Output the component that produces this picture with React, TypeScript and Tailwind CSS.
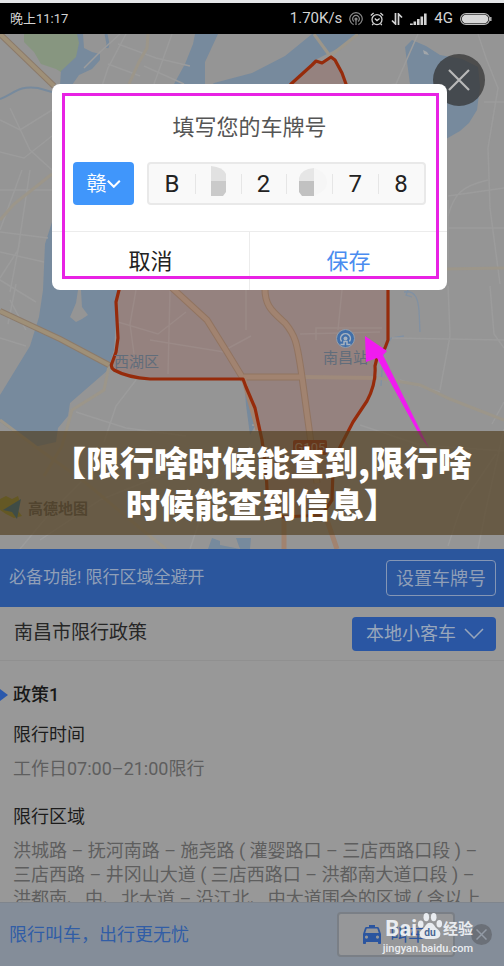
import type { ReactNode } from "react";

const plate = ["B", "", "2", "", "7", "8"];

const zone =
	"M291 84 312 65 316 61 322 63 331 57 335 60 342 73 346 84 388 286V340L385 348 377 358 375 366C376 380 373 390 367 401L353 422 340 447 333 470 332 500 322 515 283 517 268 509 266 470 262 440 255 408 246 387 243 379H150C136 378 123 375 114 370Q110 367 112 363L116 352 118 338 116 302 120 286Z";

function StatusBar() {
	return (
		<header className="shrink-0 border-t-[3px] border-[#e4e6e8] bg-black text-[#d4d4d4]">
			<div className="flex h-[31px] items-center justify-between pl-[10px] pr-3">
				<span className="text-[13px]">晚上11:17</span>
				<div className="flex items-center gap-[7px] text-[15px]">
					<span>1.70K/s</span>
					<svg width="14" height="14" viewBox="0 0 14 14" fill="none" stroke="#8a8a8a" strokeWidth="1.2">
						<path d="M4.6 12.6A6.2 6.2 0 1 1 9.4 12.6" />
						<path d="M5 9.6A3.4 3.4 0 1 1 9 9.6" />
						<circle cx="7" cy="7" r="1" fill="#8a8a8a" />
						<path d="M7 8v5" />
					</svg>
					<svg width="14" height="14" viewBox="0 0 14 14" fill="none" stroke="currentColor" strokeWidth="1.3">
						<circle cx="7" cy="7.6" r="5" />
						<path d="M4.8 6.6 7 8.6l2.6-2M.8 3.4 3.6 1M13.2 3.4 10.4 1M3.4 11.6l-1.2 1.6M10.6 11.6l1.2 1.6" />
					</svg>
					<svg width="12" height="12" viewBox="0 0 12 12" fill="none" stroke="currentColor" strokeWidth="1.7">
						<path d="M4.5 0v11L1 7.5M7.5 12V1L11 4.5" />
					</svg>
					<svg width="17" height="12" viewBox="0 0 17 12" fill="currentColor">
						<path d="M0 10.5h2.8V12H0zM3.5 8.5h2.6V12H3.5zM7 6h2.6v6H7zM10.5 3.5h2.6V12h-2.6zM14 .5h2.6V12H14z" />
					</svg>
					<span>4G</span>
					<svg width="32" height="12" viewBox="0 0 32 12">
						<rect x=".6" y=".6" width="29" height="10.8" rx="5.4" fill="none" stroke="#bdbdbd" strokeWidth="1.1" />
						<rect x="1.8" y="1.8" width="26.6" height="8.4" rx="4.2" fill="#d6d6d6" />
						<path d="M30.8 4v4" stroke="#bdbdbd" strokeWidth="1.4" />
					</svg>
				</div>
			</div>
		</header>
	);
}

function CityMap() {
	return (
		<svg
			className="block h-full w-full"
			viewBox="0 34 504 515"
			preserveAspectRatio="xMidYMid slice"
			role="img"
			aria-label="南昌市限行区域"
		>
			<rect y="34" width="504" height="515" fill="#959595" />

			{/* park */}
			<path d="M24 34h55l1 14-4 14-12 12-8-5-15-5-7-12-10-10z" fill="#879680" />

			{/* water */}
			<g fill="#778a9d">
				<path d="M77 34h6l1 14 8 4 8 2v6l-8 9-13 6-7 10H60l1-14 15-14 3-14z" />
				<path d="M195 34h23l-13 28 0 22h-31l11-20 8-20z" />
				<path d="M206 90l8-7 38-10 33-17 27-22h48l-21 14-24 12-24 26-30 10z" />
				<path d="M412 40l14 6 14 9 22 4 16 8 2 20-3 23-8 13-9 8-14 8-18-40-18-15-5-37z" />
				<path d="M52 222 45 244 43 290 39 317 30 346 0 395V422L34 447 56 442 58 428 68 416 70 403 108 370 114 350 118 290 130 222z" />
				<path d="M212 538l8 3v4l20 4-32 0zM236 538h15l-1 11h-10zM244 380l8 24 4 20-6 11-4-30z" />
			</g>
			<path d="M106 34l2 10 -1 4" stroke="#778a9d" strokeWidth="3" fill="none" />
			<path d="M0 99c14-5 18-14 38-11l14 4" stroke="#778a9d" strokeWidth="2" fill="none" />
			<path d="M78 290l-2 13-6 14 6 5 6-3 6-4-6-8-1-17z" fill="#959595" />
			<path d="M404 292c12-2 14 8 15 18l1 22M404 336l-13 2-8 18-2 30M408 290l-2 5 6 2" stroke="#8191a3" strokeWidth="1.3" fill="none" />
			<path d="M423 50l4 2 2 3-5-1z" fill="#a2a6aa" />

			{/* side streets */}
			<g stroke="#9c9c9c" strokeWidth="1.5" fill="none">
				<path d="M126 34l-18 34-6 18M84 68l16-16 20-18M118 44l38 14 34 8M108 64l32 12M172 34l-18 50M144 66l40 18" />
				<path d="M0 120l20 10 32-20M0 152l24 6 28-22M10 108l20 42 22 20M0 190h52M22 170l-22 60M0 232l48 6M30 170l-12 80-18 28M0 280l36 22M20 240l-10 52" />
				<path d="M0 338l26 8M16 284l-8 40M44 262l-44-10" />
				<path d="M136 380l-20 26-12 36M76 412l50 16 60 8M252 425l80 4M10 300l16 30" />
				<path d="M478 34l8 24 12 30-10 60 2 60 10 76M448 216c6-22 14-30 40-36M448 196l56-8M448 228h56M504 102h-20M418 34l-22 50-30 4" />
				<path d="M448 286l2 50-10 54M448 200v60M490 286l4 48 10 14M392 338l112 2M400 380l40 12M448 546l14-42 34-50M478 549l8-40 18-80M492 424l12-22" />
				<path d="M360 425l60 20 84 6M20 549l30-36 60-60M40 540l60-40 90-36M190 549l20-60 30-40" />
			</g>

			{/* restricted zone */}
			<path d={zone} fill="#95827f" />
			<g stroke="#9b8a87" strokeWidth="1.5" fill="none">
				<path d="M136 290l-6 34 4 30M118 322l40 12 28-22M170 290l-2 84M150 340l74 12M246 290v40M342 290l-4 40M316 340v-12h66M225 350l26-14M300 334l80-2" />
			</g>

			{/* main roads */}
			<g fill="none" stroke="#9c968a" strokeWidth="3">
				<path d="M148 34l-1 14-8 14-10 22M314 34l16 22 28-22M109 366l-5 24-32 20-10 36-18 30" />
				<path d="M378 378l42 7 30 14 54 21M504 268l-60 1M0 220l14-16 38-30" />
				<path d="M0 420l36 27 50 36 60 50 20 16" />
			</g>
			<path d="M303 377l74 1" fill="none" stroke="#9f8a7b" strokeWidth="4" />
			<g fill="none" stroke="#8c7b6b" strokeWidth="6">
				<path d="M0 34l54 52M0 311l60 28 49 26" />
			</g>
			<g fill="none" stroke="#9f9078" strokeWidth="4">
				<path d="M0 34l54 52M0 311l60 28 49 26" />
			</g>
			<g fill="none" stroke="#917461" strokeWidth="7">
				<path d="M170 286l37 34 20 32 17 28M265 286c-1 20 8 26 20 37 10 12 12 18 17 54l9 66 6 40M244 377h59" />
			</g>
			<g fill="none" stroke="#a18370" strokeWidth="5">
				<path d="M170 286l37 34 20 32 17 28 14 50M265 286c-1 20 8 26 20 37 10 12 12 18 17 54l9 66 6 40M244 377h59M284 510v39M320 500l17 49" />
			</g>

			<path d={zone} fill="none" stroke="#962b0b" strokeWidth="3.2" strokeLinejoin="round" />

			<text x="114" y="367" fontSize="15" fill="#616d7b">西湖区</text>
			<circle cx="345.5" cy="338.5" r="9" fill="#416fa9" stroke="#929eac" strokeWidth="1" />
			<path d="M340.500 344.500h3.500v-3h3v3h3.500M341.600 341.500a4.900 4.900 0 1 1 7.800 0" fill="none" stroke="#a6b2c0" strokeWidth="1.500" />
			<circle cx="345.5" cy="338.5" r="2" fill="#a6b2c0" />
			<text x="323" y="363" fontSize="15" fill="#616d7b">南昌站</text>
			<rect x="293" y="440" width="34" height="15" rx="2" fill="#92301c" />
			<text x="310" y="452" fontSize="13" textAnchor="middle" fill="#b29388">G105</text>

			<path d="M0 499l6-3 6 3 6-3 2 6-4 6 6 8-8 2-8-4-6-4z" fill="#8b8c35" />
			<path d="M3 510l18-11-4 20-5-7z" fill="#226b94" />
			<text x="28" y="514" fontSize="15" fontWeight="bold" fill="#555">高德地图</text>

			{/* pointer to the dialog */}
			<path d="M365 336 387 351 383 355 429 448 420 436 377 358 366 362z" fill="#f01bf0" />
		</svg>
	);
}

function PlateDialog() {
	return (
		<div role="dialog" aria-labelledby="plate-title" className="absolute left-[52px] right-[57px] top-[50px] rounded-lg bg-white">
			<h2 id="plate-title" className="pt-7 text-center text-[22px] leading-8 text-[#555]">
				填写您的车牌号
			</h2>
			<div className="flex gap-[13px] px-[21px] pb-[26px] pt-[18px]">
				<button
					type="button"
					className="flex h-[43px] w-[61px] items-center justify-center rounded bg-[#4096fb] text-[20px] text-white"
				>
					赣
					<svg width="14" height="8" viewBox="0 0 14 8" fill="none" stroke="currentColor" strokeWidth="2">
						<path d="m.8.8 6 6 6-6" />
					</svg>
				</button>
				<div className="flex min-w-0 flex-1 items-center rounded border-2 border-[#e9e9e9] bg-[#f9f9f9]">
					{plate.map((char, i) => (
						<div key={i} className="relative min-w-0 flex-1">
							{i > 0 && <span className="absolute left-0 top-1 h-5 w-px bg-[#e6e6e6]" />}
							<input
								aria-label={`车牌第${i + 1}位`}
								defaultValue={char}
								maxLength={1}
								className="block h-7 w-full bg-transparent text-center text-[24px] text-[#222] outline-none"
							/>
							{i === 1 && (
								<svg className="absolute -top-1 left-4" width="16" height="30" viewBox="0 0 16 30">
									<path d="M0 0q12 1 15 8v7H0z" fill="#e1e1e1" />
									<path d="M0 15h15v11l-3 4H0z" fill="#cacaca" />
								</svg>
							)}
							{i === 3 && (
								<svg className="absolute -top-1 left-[13px]" width="28" height="30" viewBox="0 0 28 30">
									<path d="M15 2q13 4 13 15 0 8-13 13z" fill="#f6f6f6" />
									<path d="M15 2Q2 3 0 12v3h15z" fill="#e6e6e6" />
									<path d="M0 15h15v15H3l-3-4z" fill="#c1c1c1" />
								</svg>
							)}
						</div>
					))}
				</div>
			</div>
			<div className="flex border-t border-[#ececec] text-[22px]">
				<button type="button" className="h-[58px] flex-1 border-r border-[#ececec] text-[#222]">
					取消
				</button>
				<button type="button" className="h-[58px] flex-1 text-[#4a8cf0]">
					保存
				</button>
			</div>
			<div className="pointer-events-none absolute bottom-[11px] left-[10px] right-2 top-[9px] border-[3px] border-[#e822e4]" />
		</div>
	);
}

function Policy({ title, children }: { title: string; children: ReactNode }) {
	return (
		<div className="pl-[13px] text-[18px]">
			<h4 className="leading-6 text-[#1c1c1c]">{title}</h4>
			<p className="mt-[10px] whitespace-nowrap leading-6 text-[#5e5e5e]">{children}</p>
		</div>
	);
}

function Watermark() {
	return (
		<div className="pointer-events-none absolute right-[31px] top-2 font-bold text-[#e9ecf0]">
			<div className="flex h-[30px] items-end justify-end">
				<span className="text-[22px] leading-6">Bai</span>
				<svg width="26" height="30" viewBox="0 0 28 30" fill="currentColor">
					<ellipse cx="4" cy="13" rx="3" ry="4" />
					<ellipse cx="10" cy="5.5" rx="3" ry="4.4" />
					<ellipse cx="18" cy="5.5" rx="3" ry="4.4" />
					<ellipse cx="24" cy="12.5" rx="3" ry="4" />
					<path d="M14 11.5c4 0 4.5 3.5 7 6 2.5 2.3 5 4 4 7.5-1 3.8-5 4-11 4s-10-.2-11-4c-.9-3.5 1.5-5.2 4-7.5 2.5-2.5 3-6 7-6z" />
					<text x="14" y="26" fontSize="11" textAnchor="middle" fill="#4b6795">du</text>
				</svg>
				<span className="text-[15px] leading-6">经验</span>
			</div>
			<div className="text-[11px] font-medium leading-4">jingyan.baidu.com</div>
		</div>
	);
}

export default function App() {
	return (
		<div className="flex h-screen flex-col overflow-hidden bg-[#989898] font-[Roboto,'Noto_Sans_CJK_SC',sans-serif]">
			<StatusBar />

			<main className="flex min-h-0 flex-1 flex-col">
				<section className="relative aspect-[504/515] w-full shrink-0">
					<CityMap />
					<button
						type="button"
						aria-label="关闭"
						className="absolute right-[19px] top-5 flex size-[52px] items-center justify-center rounded-full bg-[#333333bb] text-[#b9b9b9]"
					>
						<svg width="22" height="22" viewBox="0 0 22 22" stroke="currentColor" strokeWidth="2.2">
							<path d="m1 1 20 20M21 1 1 21" />
						</svg>
					</button>
					<PlateDialog />

					<div className="absolute inset-x-0 bottom-[14px] bg-[#503c1ca6] pb-[10px] pl-11 pr-6 pt-[10px]">
						<h1 className="text-center font-['Noto_Sans_CJK_SC',sans-serif] text-[34px] font-black leading-[42px] text-white">
							【限行啥时候能查到,限行啥时候能查到信息】
						</h1>
					</div>
				</section>

				<section className="flex h-[58px] shrink-0 items-center justify-between bg-[#2b569d] pl-[9px] pr-2 text-[#909fb7]">
					<p className="text-[17px]">必备功能! 限行区域全避开</p>
					<button type="button" className="h-9 rounded border border-[#8496b5] px-[9px] text-[18px]">
						设置车牌号
					</button>
				</section>

				<section className="flex h-[54px] shrink-0 items-center justify-between border-b border-[#909090] pl-[14px] pr-2">
					<h2 className="text-[19px] text-[#262626]">南昌市限行政策</h2>
					<button
						type="button"
						className="flex h-[34px] items-center gap-2 rounded bg-[#2a56a3] pl-[14px] pr-3 text-[18px] text-[#98a6bb]"
					>
						本地小客车
						<svg width="20" height="11" viewBox="0 0 20 11" fill="none" stroke="currentColor" strokeWidth="1.5">
							<path d="m1 1 9 9 9-9" />
						</svg>
					</button>
				</section>

				<section className="min-h-0 flex-1 overflow-hidden pt-[22px]">
					<h3 className="flex items-center gap-[5px] text-[18px] font-medium leading-6 text-[#181818]">
						<svg width="8" height="12" viewBox="0 0 8 12" fill="#2a58ac">
							<path d="M0 0l8 6-8 6z" />
						</svg>
						政策1
					</h3>
					<div className="mt-4 flex flex-col gap-6">
						<Policy title="限行时间">工作日07:00–21:00限行</Policy>
						<Policy title="限行区域">
							洪城路 – 抚河南路 – 施尧路 ( 灌婴路口 – 三店西路口段 ) –
							<br />
							三店西路 – 井冈山大道 ( 三店西路口 – 洪都南大道口段 ) –
							<br />
							洪都南、中、北大道 – 沿江北、中大道围合的区域 ( 含以上
						</Policy>
					</div>
				</section>
			</main>

			<footer className="relative flex h-16 shrink-0 items-center justify-between border-t border-[#7f858d] bg-[#848d99] pl-[9px] pr-3">
				<p className="text-[18px] text-[#315da6]">限行叫车，出行更无忧</p>
				<div className="flex items-center gap-4">
					<button
						type="button"
						className="flex h-[45px] w-[118px] items-center justify-center gap-2 rounded border-2 border-[#7a7f86] bg-[#969799] pr-1 text-[18px] text-[#2b559f]"
					>
						<svg width="20" height="19" viewBox="0 0 20 19" fill="currentColor" fillRule="evenodd">
							<path d="M7 0h6v2h2.5c.8 0 1.3.4 1.6 1.2L19 9v9c0 .6-.4 1-1 1h-1c-.6 0-1-.4-1-1v-1H4v1c0 .6-.4 1-1 1H2c-.6 0-1-.4-1-1V9l1.9-5.8C3.2 2.4 3.7 2 4.5 2H7zM4.7 3.5 3.2 8h13.6l-1.5-4.5zM4.5 10.5a1.6 1.6 0 1 0 0 3.2 1.6 1.6 0 0 0 0-3.2zm11 0a1.6 1.6 0 1 0 0 3.2 1.6 1.6 0 0 0 0-3.2z" />
						</svg>
						叫车
					</button>
					<button type="button" aria-label="关闭" className="flex size-[21px] items-center justify-center rounded-full bg-[#6b7078] text-[#929aa5]">
						<svg width="11" height="11" viewBox="0 0 11 11" stroke="currentColor" strokeWidth="1.5">
							<path d="m.5.5 10 10M10.5.5l-10 10" />
						</svg>
					</button>
				</div>
				<Watermark />
			</footer>
		</div>
	);
}
